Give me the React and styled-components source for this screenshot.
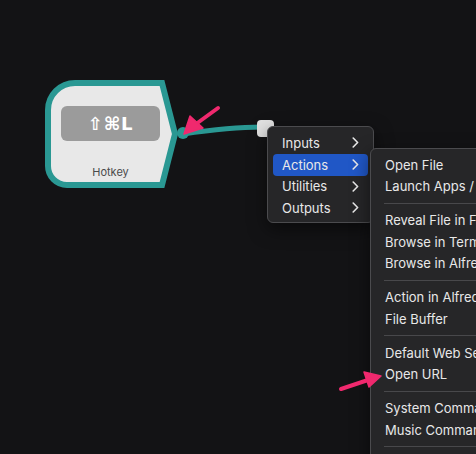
import React from "react";
import styled, { createGlobalStyle } from "styled-components";

const GlobalStyle = createGlobalStyle`
  html, body {
    margin: 0;
    padding: 0;
    background: #131315;
    overflow: hidden;
  }
  * { box-sizing: border-box; }
`;

const TEAL = "#2a9893";
const PINK = "#f0296e";

const Canvas = styled.div`
  position: relative;
  width: 476px;
  height: 454px;
  background: #131315;
  overflow: hidden;
  font-family: Inter, "Noto Sans", "Liberation Sans", sans-serif;
`;

const Layer = styled.svg`
  position: absolute;
  left: 0;
  top: 0;
  width: 476px;
  height: 454px;
  pointer-events: none;
  z-index: ${(p) => p.$z || 0};
`;

const Node = styled.div`
  position: absolute;
  left: 45px;
  top: 80px;
  width: 136px;
  height: 110px;
`;

const NodeShape = styled.svg`
  position: absolute;
  inset: 0;
  width: 136px;
  height: 110px;
`;

const NodeBody = styled.div`
  position: relative;
  display: flex;
  flex-direction: column;
  align-items: center;
  width: 99px;
  margin-left: 16px;
  padding-top: 26px;
`;

const KeyCap = styled.div`
  width: 99px;
  height: 35px;
  border-radius: 6px;
  background: #9b9b9b;
  color: #fff;
  display: flex;
  align-items: center;
  justify-content: center;
  font-family: "DejaVu Sans", "Liberation Sans", sans-serif;
  font-weight: bold;
  font-size: 18px;
  letter-spacing: 0.5px;
`;

const NodeLabel = styled.div`
  margin-top: 24px;
  font-size: 11px;
  color: #4a4a4a;
`;

const Menu = styled.div`
  position: absolute;
  left: ${(p) => p.$left}px;
  top: ${(p) => p.$top}px;
  width: ${(p) => p.$width}px;
  padding: 5px 0 3px;
  background: #262628;
  border: 1px solid #4b4b4e;
  border-radius: 6px;
  box-shadow: 0 6px 18px rgba(0, 0, 0, 0.5);
  z-index: ${(p) => p.$z};
  display: flex;
  flex-direction: column;
`;

const Item = styled.div`
  height: ${(p) => (p.$active ? 22 : 21.5)}px;
  margin: 0 5px;
  padding: 0 9px;
  border-radius: 4px;
  display: flex;
  align-items: center;
  justify-content: space-between;
  font-size: 13px;
  color: #e8e8e8;
  white-space: nowrap;
  background: ${(p) => (p.$active ? "#2057c6" : "transparent")};
`;

const Separator = styled.div`
  height: 12.5px;
  margin: 0 0 0 13px;
  display: flex;
  align-items: center;
  &::after {
    content: "";
    flex: 1;
    height: 1px;
    background: #48484b;
  }
`;

const Chevron = () => (
  <svg width="7" height="11" viewBox="0 0 7 11">
    <path d="M1.2 1 L5.6 5.5 L1.2 10" fill="none" stroke="#e8e8e8" strokeWidth="1.6" strokeLinecap="round" strokeLinejoin="round" />
  </svg>
);

const categories = ["Inputs", "Actions", "Utilities", "Outputs"];

const actions = [
  ["Open File", "Launch Apps / Files"],
  ["Reveal File in Finder", "Browse in Terminal", "Browse in Alfred"],
  ["Action in Alfred", "File Buffer"],
  ["Default Web Search", "Open URL"],
  ["System Command", "Music Command"],
  ["Copy to Clipboard"],
];

export default function App() {
  return (
    <Canvas>
      <GlobalStyle />
      <Node>
        <NodeShape viewBox="0 0 136 110">
          <path
            d="M30 3 H117 L130 54 L117 105 H22 A19 19 0 0 1 3 86 V30 A27 27 0 0 1 30 3 Z"
            fill="#e8e8e8"
            stroke={TEAL}
            strokeWidth="6"
            strokeLinejoin="miter"
          />
        </NodeShape>
        <NodeBody>
          <KeyCap>⇧⌘L</KeyCap>
          <NodeLabel>Hotkey</NodeLabel>
        </NodeBody>
      </Node>

      <Layer $z={1} viewBox="0 0 476 454">
        <path d="M183 134 C 210 130, 232 127, 262 127" fill="none" stroke={TEAL} strokeWidth="5" />
        <circle cx="183" cy="133" r="6" fill={TEAL} />
        <rect x="257" y="120" width="17" height="17" rx="4" fill="#e2e2e2" />
      </Layer>

      <Menu $left={267} $top={126} $width={107} $z={2}>
        {categories.map((c) => (
          <Item key={c} $active={c === "Actions"}>
            <span>{c}</span>
            <Chevron />
          </Item>
        ))}
      </Menu>

      <Menu $left={370} $top={148} $width={170} $z={3}>
        {actions.map((group, gi) => (
          <React.Fragment key={gi}>
            {gi > 0 && <Separator />}
            {group.map((a) => (
              <Item key={a}>
                <span>{a}</span>
              </Item>
            ))}
          </React.Fragment>
        ))}
      </Menu>

      <Layer $z={4} viewBox="0 0 476 454">
        <g fill={PINK} stroke={PINK} strokeLinecap="round" strokeLinejoin="round">
          <path d="M218 108 L196 124" strokeWidth="4" fill="none" />
          <path d="M184 134 L190 116 L203 128 Z" strokeWidth="1.5" />
          <path d="M341 389 L368 380" strokeWidth="4" fill="none" />
          <path d="M381 376 L364 372 L369 387 Z" strokeWidth="1.5" />
        </g>
      </Layer>
    </Canvas>
  );
}
